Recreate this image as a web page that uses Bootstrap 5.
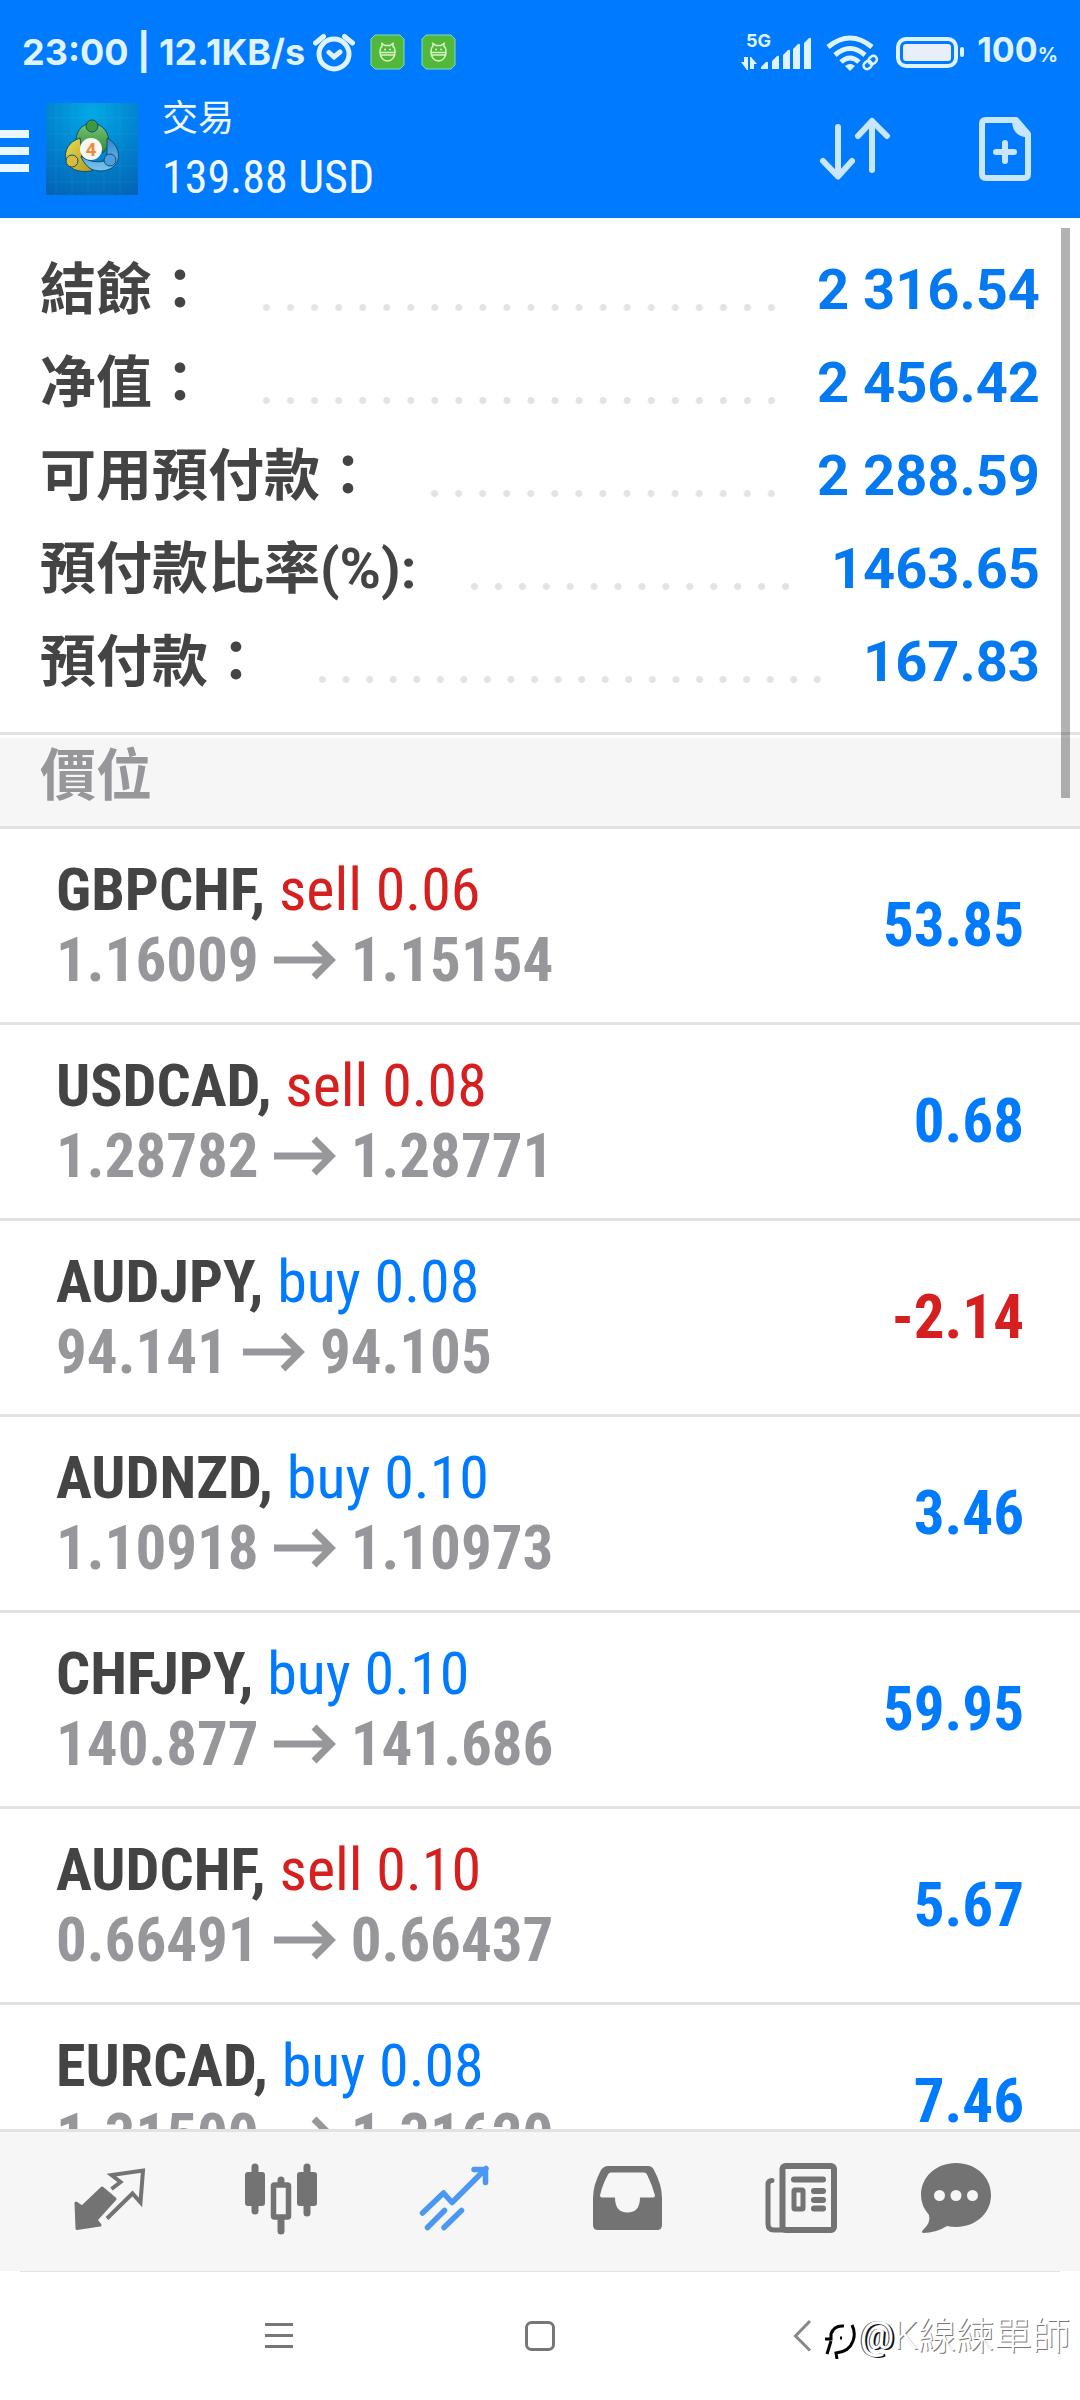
<!DOCTYPE html>
<html lang="zh-Hant">
<head>
<meta charset="utf-8">
<meta name="viewport" content="width=device-width, initial-scale=1">
<title>交易</title>
<link href="https://cdn.jsdelivr.net/npm/bootstrap@5.3.0/dist/css/bootstrap.min.css" rel="stylesheet">
<style>
  :root { --blue: #007aff; --up: #0579f2; --down: #d62020; --line: #e2e2e4; --bar: #f6f6f7; --ink: #444; --muted: #97979b; }
  body { font-family: Roboto, "Noto Sans CJK TC", sans-serif; color: var(--ink); background: #fff; }
  svg { display: block; flex: none; }
  .narrow { font-family: "Roboto Condensed", Roboto, "Noto Sans CJK TC", sans-serif; }
  .top-bar { background: var(--blue); color: #f0f9ff; }
  .status-bar { height: 80px; padding: 24px 22px 0; font-family: Inter, sans-serif; font-weight: 700; font-size: 36px; line-height: 56px; color: #dff3ff; }
  .status-bar .charge { font-size: 34px; margin-left: 12px; }
  .status-bar .pct { font-size: 20px; }
  .tool-bar { height: 138px; padding-right: 49px; }
  .tool-bar button, .sys-bar button { border: 0; padding: 0; background: none; }
  .page-title { font-size: 36px; line-height: 56px; }
  .page-sum { font-size: 46px; line-height: 60px; }
  .summary { padding: 25px 40px 24px; }
  .summary-row { height: 93px; font-size: 56px; line-height: 90px; }
  .summary-row dt { font-weight: 700; }
  .summary-row dd { font-weight: 700; color: var(--up); }
  .leader { height: 7px; margin: 36px 34px 0 47px; background: radial-gradient(circle at center, #e3e3e3 3px, transparent 4px) right center / 23px 7px; background-repeat: space no-repeat; }
  .section-head { border-top: 3px solid var(--line); border-bottom: 3px solid var(--line); padding-top: 3px; }
  .section-head h2 { background: var(--bar); height: 88px; padding: 0 40px; font-size: 56px; line-height: 76px; font-weight: 700; color: var(--muted); }
  .deal { padding: 26px 56px 27px; border-bottom: 3px solid var(--line); line-height: 70px; font-size: 60px; }
  .deal-price { gap: 15px; color: var(--muted); font-weight: 700; font-size: 61px; }
  .deal-profit { font-weight: 700; font-size: 61px; }
  .up { color: var(--blue); }
  .down { color: var(--down); }
  .thumb-bar { top: 10px; right: 10px; width: 9px; height: 570px; background: rgba(0,0,0,.3); }
  .tab-strip { background: var(--bar); border-top: 3px solid var(--line); height: 142px; padding: 0 22px; }
  .sys-bar { height: 129px; gap: 201px; }
  .sys-bar::before { content: ""; position: absolute; top: 0; left: 20px; right: 20px; border-top: 1px solid var(--line); }
  .sys-bar button { width: 60px; height: 60px; }
  .stamp { right: 10px; top: 38px; font-size: 38px; line-height: 54px; font-weight: 300; color: #fff; text-shadow: 1px 1px 0 #777; }
  .stamp .at { font-weight: 500; text-shadow: 2px 1px 0 #111, -1px 0 0 #444; }
</style>
</head>
<body>
<div class="d-flex flex-column vh-100 overflow-hidden">
  <header class="top-bar flex-shrink-0">
    <div class="status-bar d-flex justify-content-between align-items-center">
      <div class="d-flex align-items-center">
        <span>23:00 | 12.1KB/s</span>
        <svg class="ms-2" width="42" height="40" viewBox="313 32 42 40" fill="none" stroke="#dff3ff" stroke-width="5" stroke-linecap="round"><circle cx="334" cy="54" r="15"/><path d="M315.500 43l8-6.500M352.500 43l-8-6.500M329 52.500l5 4.500 6-5" /></svg>
        <svg style="margin-left:15px" width="35" height="36" viewBox="0 0 35 36"><path d="M5 1h25l4 4v26l-4 4H5l-4-4V5z" fill="#52b83c" stroke="#82d8b8" stroke-width="1"/><g fill="none" stroke="#d8f4c4" stroke-width="1.500"><path d="M10 18.500h15M10 18c0-3 1-5 2-5.500v-3l3 2h5l3-2v3c1 .5 2 2.500 2 5.500 0 5-3 9-7.500 9S10 23 10 18zM10 21h15M14 15.500h2M19 15.500h2"/></g></svg>
        <svg class="ms-3" width="35" height="36" viewBox="0 0 35 36"><path d="M5 1h25l4 4v26l-4 4H5l-4-4V5z" fill="#52b83c" stroke="#82d8b8" stroke-width="1"/><g fill="none" stroke="#d8f4c4" stroke-width="1.500"><path d="M10 18.500h15M10 18c0-3 1-5 2-5.500v-3l3 2h5l3-2v3c1 .5 2 2.500 2 5.500 0 5-3 9-7.500 9S10 23 10 18zM10 21h15M14 15.500h2M19 15.500h2"/></g></svg>
      </div>
      <div class="d-flex align-items-center">
        <svg width="71" height="40" viewBox="745 32 71 40" fill="#dff3ff"><text x="750" y="47" font-size="18" font-weight="700" font-family="Inter, sans-serif">5G</text><path d="M745 62h3v-5h4v13h-1zM754 57h1l6 7h-3v5h-4zM765 67l5-5q2-1 2 1v6h-7zM776 61l5-5q2-1 2 1v12h-7zM787 55l5-5q2-1 2 1v18h-7zM797 49l5-5q2-1 2 1v24h-7zM808 43l5-5q2-1 2 1v30h-7z"/></svg>
        <svg style="margin-left:13px" width="54" height="42" viewBox="828 33 54 42" fill="none" stroke="#dff3ff" stroke-width="5"><path d="M831 49q22-18 44 0M838 57q15-13 30 0M844 64q9-8 18 0"/><path d="M848 68q5-4 10 0l-5 5z" fill="#dff3ff" stroke="none"/><g stroke-width="2.500"><rect x="866" y="64" width="9" height="7" rx="3.500" transform="rotate(-45 870 67)"/><rect x="871" y="59" width="9" height="7" rx="3.500" transform="rotate(-45 875 62)"/></g></svg>
        <svg style="margin-left:17px" width="69" height="32" viewBox="899 36 69 32"><rect x="901" y="39" width="58" height="27" rx="8" fill="none" stroke="#dff3ff" stroke-width="4"/><rect x="906" y="44" width="48" height="17" rx="3" fill="#e8eff9"/><rect x="963" y="47" width="4" height="10" rx="2" fill="#dff3ff"/></svg>
        <span class="charge">100<span class="pct">%</span></span>
      </div>
    </div>
    <div class="tool-bar d-flex align-items-center">
      <button type="button" aria-label="選單"><svg width="30" height="46" viewBox="0 0 30 46" fill="#eaf7ff"><path d="M0 4h29v8H0zM0 21h29v8H0zM0 38h29v8H0z"/></svg></button>
      <svg style="margin-left:16px" width="92" height="92" viewBox="0 0 92 92">
        <defs>
          <radialGradient id="sky" cx=".5" cy=".1" r="1"><stop offset="0" stop-color="#02a9e6"/><stop offset=".55" stop-color="#0280cc"/><stop offset="1" stop-color="#0463b4"/></radialGradient>
          <linearGradient id="gr" x2="0" y2="1"><stop offset="0" stop-color="#7cc576"/><stop offset="1" stop-color="#2c8a35"/></linearGradient>
          <linearGradient id="ye" x2="1" y2="1"><stop offset="0" stop-color="#e9dc55"/><stop offset="1" stop-color="#b59a1c"/></linearGradient>
          <linearGradient id="bl" x2="0" y2="1"><stop offset="0" stop-color="#2f86cc"/><stop offset="1" stop-color="#7cc4f0"/></linearGradient>
        </defs>
        <rect width="92" height="92" fill="url(#sky)"/>
        <path d="M0 15h92M0 31h92M0 47h92M0 63h92M0 79h92M10 0v92M26 0v92M42 0v92M58 0v92M74 0v92" stroke="#3fc0f0" stroke-opacity=".15"/>
        <g stroke="#0c5070" stroke-width="1">
          <path d="M46 20c-12 1-17 10-16 22l6 6 8-12 9 6 4 8 6-8c1-12-6-21-17-22z" fill="url(#gr)"/>
          <path d="M34 35c-12 4-16 13-14 22 2 9 12 13 26 11l-2-10-8-4-1-12z" fill="url(#ye)"/>
          <path d="M61 35c9 5 13 13 11 22-3 9-15 14-27 9-5-3-9-9-10-13 6 5 15 7 23 5l3-8z" fill="url(#bl)"/>
          <circle cx="46" cy="23" r="6" fill="#3f9740"/><circle cx="26" cy="58" r="6" fill="#d9bc3c"/><circle cx="64" cy="57" r="6" fill="#4b9fdc"/>
        </g>
        <circle cx="45" cy="46" r="11" fill="#fbf7f2"/>
        <text x="45" y="53" font-size="19" font-weight="700" fill="#ee8a3c" text-anchor="middle" font-family="Roboto, sans-serif">4</text>
      </svg>
      <div class="ms-4 flex-grow-1">
        <h1 class="page-title mb-0 fw-normal">交易</h1>
        <div class="page-sum narrow">139.88 USD</div>
      </div>
      <button type="button" aria-label="排序"><svg width="72" height="64" viewBox="820 117 72 64" fill="none" stroke="#c8e6ff" stroke-width="6" stroke-linecap="round" stroke-linejoin="round"><path d="M839 127v49M824 161l15 15.500 14-15.500M873 170v-49M859 136l14-15 15 15"/></svg></button>
      <button type="button" aria-label="新訂單" style="margin-left:87px"><svg width="53" height="66" viewBox="978 116 53 66" fill="none" stroke="#c8e6ff" stroke-width="6" stroke-linejoin="round" stroke-linecap="round"><path d="M986 120h30l12 14v40q0 4-4 4h-38q-4 0-4-4v-50q0-4 4-4z"/><path d="M1012 120h5l12 14v3h-4q-13-2-13-17z" fill="#c8e6ff" stroke="none"/><path d="M1005 143v18M996 152h18"/></svg></button>
    </div>
  </header>

  <main class="flex-grow-1 overflow-hidden position-relative">
    <dl class="summary mb-0">
      <div class="summary-row d-flex align-items-center"><dt>結餘：</dt><div class="leader flex-grow-1"></div><dd class="mb-0">2 316.54</dd></div>
      <div class="summary-row d-flex align-items-center"><dt>净值：</dt><div class="leader flex-grow-1"></div><dd class="mb-0">2 456.42</dd></div>
      <div class="summary-row d-flex align-items-center"><dt>可用預付款：</dt><div class="leader flex-grow-1"></div><dd class="mb-0">2 288.59</dd></div>
      <div class="summary-row d-flex align-items-center"><dt>預付款比率(%):</dt><div class="leader flex-grow-1"></div><dd class="mb-0">1463.65</dd></div>
      <div class="summary-row d-flex align-items-center"><dt>預付款：</dt><div class="leader flex-grow-1"></div><dd class="mb-0">167.83</dd></div>
    </dl>
    <div class="section-head"><h2 class="mb-0">價位</h2></div>
    <svg class="d-none"><symbol id="arrow" viewBox="0 0 62 40"><path d="M0 20h56M40 3l17 17-17 17" fill="none" stroke="#97979b" stroke-width="7"/></symbol></svg>
    <ul class="list-unstyled mb-0 narrow">
      <li class="deal d-flex justify-content-between align-items-center"><div><div><b>GBPCHF,</b> <span class="down">sell 0.06</span></div><div class="deal-price d-flex align-items-center">1.16009 <svg width="62" height="40"><use href="#arrow"/></svg> 1.15154</div></div><div class="deal-profit up">53.85</div></li>
      <li class="deal d-flex justify-content-between align-items-center"><div><div><b>USDCAD,</b> <span class="down">sell 0.08</span></div><div class="deal-price d-flex align-items-center">1.28782 <svg width="62" height="40"><use href="#arrow"/></svg> 1.28771</div></div><div class="deal-profit up">0.68</div></li>
      <li class="deal d-flex justify-content-between align-items-center"><div><div><b>AUDJPY,</b> <span class="up">buy 0.08</span></div><div class="deal-price d-flex align-items-center">94.141 <svg width="62" height="40"><use href="#arrow"/></svg> 94.105</div></div><div class="deal-profit down">-2.14</div></li>
      <li class="deal d-flex justify-content-between align-items-center"><div><div><b>AUDNZD,</b> <span class="up">buy 0.10</span></div><div class="deal-price d-flex align-items-center">1.10918 <svg width="62" height="40"><use href="#arrow"/></svg> 1.10973</div></div><div class="deal-profit up">3.46</div></li>
      <li class="deal d-flex justify-content-between align-items-center"><div><div><b>CHFJPY,</b> <span class="up">buy 0.10</span></div><div class="deal-price d-flex align-items-center">140.877 <svg width="62" height="40"><use href="#arrow"/></svg> 141.686</div></div><div class="deal-profit up">59.95</div></li>
      <li class="deal d-flex justify-content-between align-items-center"><div><div><b>AUDCHF,</b> <span class="down">sell 0.10</span></div><div class="deal-price d-flex align-items-center">0.66491 <svg width="62" height="40"><use href="#arrow"/></svg> 0.66437</div></div><div class="deal-profit up">5.67</div></li>
      <li class="deal d-flex justify-content-between align-items-center"><div><div><b>EURCAD,</b> <span class="up">buy 0.08</span></div><div class="deal-price d-flex align-items-center">1.31500 <svg width="62" height="40"><use href="#arrow"/></svg> 1.31620</div></div><div class="deal-profit up">7.46</div></li>
    </ul>
    <div class="thumb-bar position-absolute"></div>
  </main>

  <nav class="tab-strip d-flex align-items-center justify-content-around flex-shrink-0">
    <a href="#" aria-label="報價"><svg width="104" height="80" viewBox="56 2162 104 80"><path d="M111.500 2189l9-7-9-7 31.500-4.500-2.500 32-8-9-25.500 25" fill="none" stroke="#737373" stroke-width="4"/><path d="M76 2203l6 4 20-19 13 11-19 21 4 5-23 3.500z" fill="#737373" stroke="#737373" stroke-width="3" stroke-linejoin="round"/></svg></a>
    <a href="#" aria-label="圖表"><svg width="104" height="80" viewBox="229 2162 104 80" fill="#737373"><rect x="245" y="2172" width="20" height="34" rx="3"/><rect x="297" y="2172" width="20" height="34" rx="3"/><path d="M255 2167v44M307 2167v46M281 2180v6M281 2218v13" stroke="#737373" stroke-width="7" stroke-linecap="round"/><rect x="273.500" y="2185" width="15" height="32" rx="1" fill="#f6f6f7" stroke="#737373" stroke-width="5.500"/></svg></a>
    <a href="#" aria-label="交易"><svg width="104" height="80" viewBox="402 2162 104 80" fill="none" stroke="#4a98f3" stroke-width="5.500" stroke-linecap="round" stroke-linejoin="round"><path d="M422.500 2213l21-20 8.500 9.500 34-34M474 2169.500h11.500v13M427.500 2227.500l17-17M444 2227.500l17.500-17"/></svg></a>
    <a href="#" aria-label="歷史"><svg width="104" height="80" viewBox="574 2162 104 80" fill="#737373"><path fill-rule="evenodd" d="M608 2166h40q4 0 6 4 8 15 8 28v27q0 5-5 5h-59q-5 0-5-5v-27q0-13 8-28 3-4 7-4zM611 2172.500q-2 0-3 2-6 11-8 21 0 2 2 2h13q0 15 12.500 15t12.500-15h13q2 0 2-2-3-11-8-21-1-2-3-2z"/></svg></a>
    <a href="#" aria-label="新聞"><svg width="104" height="80" viewBox="747 2162 104 80" fill="none" stroke="#737373" stroke-width="6" stroke-linecap="round"><rect x="782.500" y="2166" width="51.500" height="64" rx="3"/><path d="M772 2180.500q-4 0-4 4V2224q0 6 6 6h9" stroke-width="5"/><path d="M794 2179.500h29M814 2191h9M814 2200h9M814 2208.500h9"/><rect x="794" y="2190" width="9" height="19" rx="1" stroke-width="5"/></svg></a>
    <a href="#" aria-label="郵箱"><svg width="104" height="80" viewBox="920 2162 104 80" fill="#737373"><path d="M956 2163c20 0 35 14 35 32s-15 32-35 32q-5 0-9-1-11 7-24 7-2-1 0-3 8-7 6-15-8-9-8-20c0-18 15-32 35-32z"/><g fill="#f6f6f7"><circle cx="939.500" cy="2195.500" r="5.500"/><circle cx="956" cy="2195.500" r="5.500"/><circle cx="972.500" cy="2195.500" r="5.500"/></g></svg></a>
  </nav>

  <footer class="sys-bar position-relative d-flex align-items-center justify-content-center flex-shrink-0">
    <button type="button" aria-label="最近"><svg width="60" height="60" fill="none" stroke="#777" stroke-width="3"><path d="M16 18.500h28M16 29.500h28M16 40.500h28"/></svg></button>
    <button type="button" aria-label="主畫面"><svg width="60" height="60" fill="none" stroke="#777" stroke-width="3"><rect x="16.500" y="16.500" width="27" height="27" rx="5"/></svg></button>
    <button type="button" aria-label="返回"><svg width="60" height="60" fill="none" stroke="#888" stroke-width="3"><path d="M39 15L24.500 30 39 44.500"/></svg></button>
    <div class="stamp position-absolute d-flex align-items-center">
      <svg width="38" height="46" viewBox="820 2315 38 46" fill="none" stroke="#000" stroke-width="3"><path d="M823 2341h6v-5q3-9 13-8M829 2343l-4 13M850 2327q4 8 1 16-4 11-17 12l1 6M838 2340h2"/></svg>
      <span class="at">@</span><span>K線練單師</span>
    </div>
  </footer>
</div>
<script src="https://cdn.jsdelivr.net/npm/bootstrap@5.3.0/dist/js/bootstrap.bundle.min.js"></script>
</body>
</html>
